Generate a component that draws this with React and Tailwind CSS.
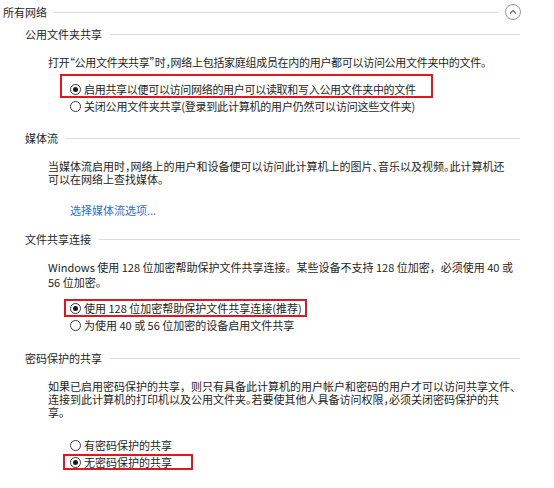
import React from "react";

const font = { fontFamily: '"Noto Sans CJK SC", "Noto Sans", sans-serif' };

function Radio({ checked }) {
  return (
    <span className="flex h-[11px] w-[11px] shrink-0 items-center justify-center rounded-full border border-[#3a3a3a] bg-white">
      {checked && <span className="block h-[5px] w-[5px] rounded-full bg-[#1a1a1a]" />}
    </span>
  );
}

function Heading({ children, mt, h = "h-4" }) {
  return (
    <div className={`flex ${h} items-center pl-[25px] pr-[34px] ${mt}`}>
      <span className="whitespace-nowrap text-[11px] leading-none text-[#1e1e1e]">{children}</span>
      <div className="ml-[8px] h-px flex-1 bg-[#dadada]" />
    </div>
  );
}

function Option({ checked, children, className = "", textClass = "" }) {
  return (
    <div className={`flex items-center gap-[3px] ${className}`}>
      <Radio checked={checked} />
      <span className={`whitespace-nowrap text-[11px] leading-[12px] text-[#1e1e1e] ${textClass}`}>{children}</span>
    </div>
  );
}

export default function App() {
  return (
    <div className="h-[488px] w-[554px] overflow-hidden bg-white" style={font}>
      {/* 所有网络 */}
      <div className="flex h-6 items-center pl-[3px] pr-[33px]">
        <span className="whitespace-nowrap text-[11px] leading-none text-[#1e1e1e]">所有网络</span>
        <div className="ml-[7px] h-px flex-1 bg-[#dadada]" />
        <div className="ml-[7px] flex h-[16px] w-[16px] items-center justify-center rounded-full border border-[#9a9a9a]">
          <svg width="8" height="6" viewBox="0 0 8 6" fill="none">
            <path d="M1 4.5 L4 1.5 L7 4.5" stroke="#6a6a6a" strokeWidth="1.1" />
          </svg>
        </div>
      </div>

      <Heading mt="mt-0" h="h-5">公用文件夹共享</Heading>

      <div className="ml-[48px] mt-[10px] flex h-4 items-center whitespace-nowrap text-[11px] leading-none tracking-[-0.3px] text-[#1e1e1e] [font-feature-settings:'halt']">
        打开“公用文件夹共享”时，网络上包括家庭组成员在内的用户都可以访问公用文件夹中的文件。
      </div>

      <div className="ml-[60px] mt-[4px] h-[24px] w-[373px] border-2 border-[#e3161f] pl-[8px] pt-[7px]">
        <Option checked textClass="tracking-[-0.3px]">启用共享以便可以访问网络的用户可以读取和写入公用文件夹中的文件</Option>
      </div>
      <Option className="ml-[70px] h-4" textClass="tracking-[-0.2px]">关闭公用文件夹共享(登录到此计算机的用户仍然可以访问这些文件夹)</Option>

      <Heading mt="mt-[16px]">媒体流</Heading>

      <div className="ml-[48px] mt-[14px] text-[11px] leading-[13px] text-[#1e1e1e]">
        <div className="whitespace-nowrap [font-feature-settings:'halt']">当媒体流启用时，网络上的用户和设备便可以访问此计算机上的图片、音乐以及视频。此计算机还</div>
        <div className="whitespace-nowrap">可以在网络上查找媒体。</div>
      </div>

      <div className="ml-[70px] mt-[16px] flex h-4 items-center whitespace-nowrap text-[11px] leading-none text-[#2b72c6]">
        选择媒体流选项...
      </div>

      <Heading mt="mt-[13px]">文件共享连接</Heading>

      <div className="ml-[48px] mt-[13px] text-[11px] leading-[15px] text-[#1e1e1e]">
        <div className="whitespace-nowrap">Windows 使用 128 位加密帮助保护文件共享连接。某些设备不支持 128 位加密，必须使用 40 或</div>
        <div className="whitespace-nowrap">56 位加密。</div>
      </div>

      <div className="ml-[64px] mt-[9px] flex h-[18px] w-[243px] items-center border-2 border-[#e3161f] pl-[4px]">
        <Option checked>使用 128 位加密帮助保护文件共享连接(推荐)</Option>
      </div>
      <Option className="ml-[70px] h-4">为使用 40 或 56 位加密的设备启用文件共享</Option>

      <Heading mt="mt-[17px]">密码保护的共享</Heading>

      <div className="ml-[48px] mt-[14px] text-[11px] leading-[13px] text-[#1e1e1e]">
        <div className="whitespace-nowrap">如果已启用密码保护的共享，则只有具备此计算机的用户帐户和密码的用户才可以访问共享文件、</div>
        <div className="whitespace-nowrap [font-feature-settings:'halt']">连接到此计算机的打印机以及公用文件夹。若要使其他人具备访问权限，必须关闭密码保护的共</div>
        <div className="whitespace-nowrap">享。</div>
      </div>

      <Option className="ml-[70px] mt-[18px] h-4">有密码保护的共享</Option>
      <div className="ml-[63px] mt-[1px] flex h-[16px] w-[130px] items-center border-2 border-[#e3161f] pl-[5px]">
        <Option checked>无密码保护的共享</Option>
      </div>
    </div>
  );
}
